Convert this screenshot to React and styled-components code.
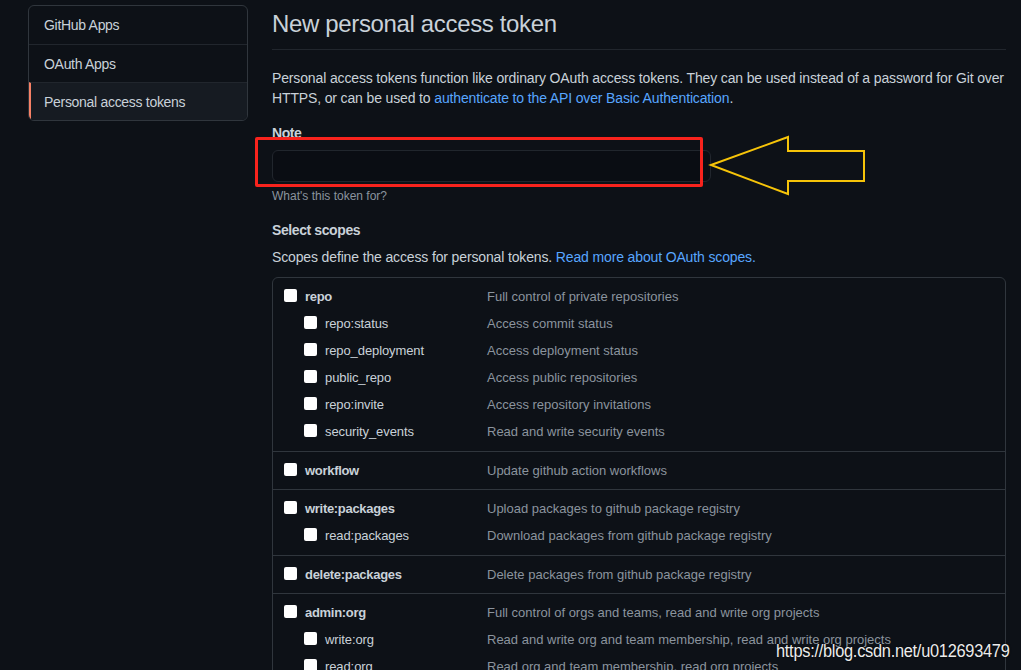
import React from "react";
import styled, { createGlobalStyle } from "styled-components";

const Global = createGlobalStyle`
  html, body { margin: 0; padding: 0; background: #0d1117; overflow: hidden; }
  body { font-family: "Liberation Sans", Arial, sans-serif; color: #c9d1d9; font-size: 14px; }
  * { box-sizing: border-box; }
`;

const Page = styled.div`
  position: relative;
  display: flex;
  align-items: flex-start;
  gap: 24px;
  padding: 5px 0 0 28px;
  width: 1021px;
  height: 670px;
  overflow: hidden;
`;

const SideNav = styled.nav`
  width: 220px;
  flex: none;
  border: 1px solid #30363d;
  border-radius: 6px;
  overflow: hidden;
`;

const NavItem = styled.div`
  height: 38px;
  display: flex;
  align-items: center;
  padding-left: ${(p) => (p.$active ? "13px" : "15px")};
  border-top: ${(p) => (p.$first ? "none" : "1px solid #21262d")};
  border-left: ${(p) => (p.$active ? "2px solid #f78166" : "none")};
  background: ${(p) => (p.$active ? "#161b22" : "transparent")};
  color: #c9d1d9;
  font-size: 14px;
  letter-spacing: -0.3px;
`;

const Main = styled.main`
  width: 734px;
  flex: none;
`;

const Subhead = styled.div`
  border-bottom: 1px solid #21262d;
  padding: 1px 0 7px;
`;

const Title = styled.h2`
  margin: 0;
  font-size: 24px;
  font-weight: 400;
  line-height: 36px;
  letter-spacing: -0.35px;
  color: #c9d1d9;
`;

const Text = styled.p`
  margin: ${(p) => p.$m || "0"};
  font-size: 14px;
  line-height: 20px;
  letter-spacing: -0.14px;
  color: #c9d1d9;
`;

const Link = styled.a`
  color: #58a6ff;
  text-decoration: none;
`;

const Label = styled.div`
  margin: ${(p) => p.$m || "0"};
  font-size: 14px;
  font-weight: 700;
  line-height: 20px;
  letter-spacing: -0.4px;
  color: #c9d1d9;
`;

const Field = styled.div`
  position: relative;
  width: 439px;
  margin-top: 7px;
`;

const Input = styled.div`
  height: 32px;
  border: 1px solid #21262d;
  border-radius: 6px;
  background: #0a0d13;
`;

const Highlight = styled.div`
  position: absolute;
  left: -17px;
  top: -13px;
  width: 448px;
  height: 50px;
  border: 3px solid #f8231d;
  border-radius: 2px;
  pointer-events: none;
`;

const Arrow = styled.svg`
  position: absolute;
  left: 436px;
  top: -15px;
  overflow: visible;
`;

const Hint = styled.div`
  margin-top: 5px;
  font-size: 12px;
  line-height: 18px;
  color: #8b949e;
  letter-spacing: 0;
`;

const ScopeBox = styled.div`
  margin-top: 10px;
  border: 1px solid #30363d;
  border-radius: 6px;
`;

const Group = styled.div`
  padding: 5.25px 0;
  border-top: ${(p) => (p.$first ? "none" : "1px solid #30363d")};
`;

const ScopeRow = styled.div`
  display: grid;
  grid-template-columns: ${(p) => (p.$sub ? "31px 21px 162px 1fr" : "11px 21px 182px 1fr")};
  align-items: center;
  height: 27px;
`;

const Check = styled.span`
  grid-column: 2;
  width: 13px;
  height: 13px;
  background: #ffffff;
  border-radius: 2px;
  margin-top: -2px;
`;

const Name = styled.span`
  font-size: 13px;
  font-weight: ${(p) => (p.$sub ? 400 : 700)};
  color: #c9d1d9;
  letter-spacing: ${(p) => (p.$sub ? "-0.1px" : "-0.3px")};
  white-space: nowrap;
`;

const Desc = styled.span`
  font-size: 13px;
  color: #8b949e;
  letter-spacing: 0;
  white-space: nowrap;
`;

const Watermark = styled.div`
  position: absolute;
  left: 776px;
  top: 640px;
  font-family: "Liberation Sans", Arial, sans-serif;
  font-size: 18px;
  line-height: 22px;
  color: #ececec;
  letter-spacing: -0.3px;
  transform: scaleX(0.91);
  transform-origin: left center;
  text-shadow: 0 0 2px #000;
  white-space: nowrap;
`;

const groups = [
  [
    ["repo", "Full control of private repositories"],
    ["repo:status", "Access commit status"],
    ["repo_deployment", "Access deployment status"],
    ["public_repo", "Access public repositories"],
    ["repo:invite", "Access repository invitations"],
    ["security_events", "Read and write security events"],
  ],
  [["workflow", "Update github action workflows"]],
  [
    ["write:packages", "Upload packages to github package registry"],
    ["read:packages", "Download packages from github package registry"],
  ],
  [["delete:packages", "Delete packages from github package registry"]],
  [
    ["admin:org", "Full control of orgs and teams, read and write org projects"],
    ["write:org", "Read and write org and team membership, read and write org projects"],
    ["read:org", "Read org and team membership, read org projects"],
  ],
];

export default function App() {
  return (
    <>
      <Global />
      <Page>
        <SideNav>
          <NavItem $first>GitHub Apps</NavItem>
          <NavItem>OAuth Apps</NavItem>
          <NavItem $active>Personal access tokens</NavItem>
        </SideNav>
        <Main>
          <Subhead>
            <Title>New personal access token</Title>
          </Subhead>
          <Text $m="18px 0 0">
            Personal access tokens function like ordinary OAuth access tokens. They can be used instead of a password for Git over HTTPS, or can be used to{" "}
            <Link>authenticate to the API over Basic Authentication</Link>.
          </Text>
          <Label $m="15px 0 0">Note</Label>
          <Field>
            <Input />
            <Highlight />
            <Arrow width="160" height="60" viewBox="0 0 160 60">
              <polygon
                points="3,30 80,2 80,16 156,16 156,46 80,46 80,59"
                fill="none"
                stroke="#f6c409"
                strokeWidth="2"
                strokeLinejoin="miter"
              />
            </Arrow>
          </Field>
          <Hint>What's this token for?</Hint>
          <Label $m="15px 0 0">Select scopes</Label>
          <Text $m="7px 0 0">
            Scopes define the access for personal tokens. <Link>Read more about OAuth scopes.</Link>
          </Text>
          <ScopeBox>
            {groups.map((g, gi) => (
              <Group key={gi} $first={gi === 0}>
                {g.map(([name, desc], i) => (
                  <ScopeRow key={name} $sub={i > 0}>
                    <span />
                    <Check />
                    <Name $sub={i > 0}>{name}</Name>
                    <Desc>{desc}</Desc>
                  </ScopeRow>
                ))}
              </Group>
            ))}
          </ScopeBox>
        </Main>
        <Watermark>https://blog.csdn.net/u012693479</Watermark>
      </Page>
    </>
  );
}
